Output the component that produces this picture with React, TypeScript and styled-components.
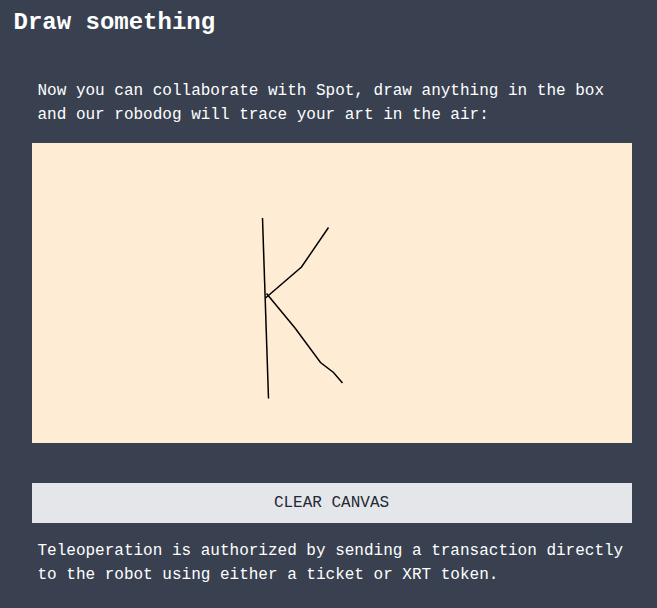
import React, { useRef, useState } from "react";
import styled, { createGlobalStyle } from "styled-components";

const GlobalStyle = createGlobalStyle`
  *, *::before, *::after { box-sizing: border-box; }
  body { margin: 0; background: #394151; }
`;

const Page = styled.main`
  width: 657px;
  height: 608px;
  overflow: hidden;
  background: #394151;
  color: #ffffff;
  font-family: "Liberation Mono", "Courier New", monospace;
  font-size: 16px;
  line-height: 24px;
`;

const Title = styled.h2`
  margin: 0;
  padding: 7px 13.5px 0;
  font-size: 24px;
  font-weight: 700;
  line-height: 32px;
`;

const Panel = styled.section`
  display: flex;
  flex-direction: column;
  width: 600px;
  margin: 40px 0 0 32px;
`;

const Copy = styled.p`
  margin: 0;
  padding-left: 5.5px;
  white-space: nowrap;
`;

const Canvas = styled.svg`
  display: block;
  width: 600px;
  height: 300px;
  margin: 16px 0 40px;
  background: #ffecd5;
  touch-action: none;
`;

const ClearButton = styled.button`
  height: 40px;
  margin: 0 0 16px;
  padding: 0 1px 0 0;
  border: 0;
  background: #e5e6ea;
  color: #1f2937;
  font: inherit;
  text-transform: uppercase;
  cursor: pointer;
`;

const initialStrokes = [
  "230.5,75 236.5,255.5",
  "296.5,84.5 269.5,124 233.5,155",
  "234.5,150.5 263,185 288.5,219.5 301.5,229.5 310.5,240",
];

export default function App() {
  const [strokes, setStrokes] = useState<string[]>(initialStrokes);
  const drawing = useRef(false);

  const pointAt = (e: React.PointerEvent<SVGSVGElement>) => {
    const box = e.currentTarget.getBoundingClientRect();
    return `${e.clientX - box.left},${e.clientY - box.top}`;
  };

  const start = (e: React.PointerEvent<SVGSVGElement>) => {
    const point = pointAt(e);
    drawing.current = true;
    setStrokes((all) => [...all, point]);
  };

  const extend = (e: React.PointerEvent<SVGSVGElement>) => {
    if (!drawing.current) return;
    const point = pointAt(e);
    setStrokes((all) => [...all.slice(0, -1), `${all[all.length - 1]} ${point}`]);
  };

  const stop = () => {
    drawing.current = false;
  };

  return (
    <Page>
      <GlobalStyle />
      <Title>Draw something</Title>
      <Panel>
        <Copy>
          Now you can collaborate with Spot, draw anything in the box
          <br />
          and our robodog will trace your art in the air:
        </Copy>
        <Canvas
          viewBox="0 0 600 300"
          onPointerDown={start}
          onPointerMove={extend}
          onPointerUp={stop}
          onPointerLeave={stop}
        >
          {strokes.map((points, i) => (
            <polyline key={i} points={points} fill="none" stroke="#000" strokeWidth="1.5" />
          ))}
        </Canvas>
        <ClearButton type="button" onClick={() => setStrokes([])}>
          Clear canvas
        </ClearButton>
        <Copy>
          Teleoperation is authorized by sending a transaction directly
          <br />
          to the robot using either a ticket or XRT token.
        </Copy>
      </Panel>
    </Page>
  );
}
